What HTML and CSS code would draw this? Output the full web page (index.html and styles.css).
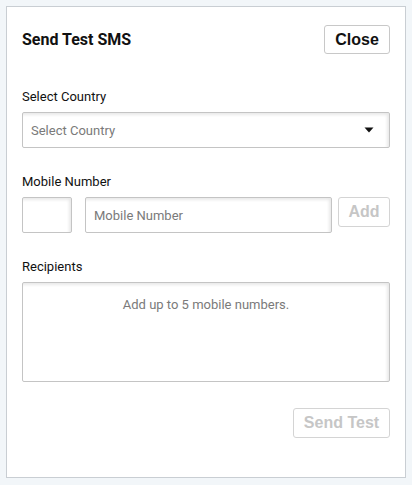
FILE: index.html
```html
<!DOCTYPE html>
<html lang="en">
<head>
<meta charset="utf-8">
<title>Send Test SMS</title>
<link rel="stylesheet" href="styles.css">
</head>
<body>
<div class="card">
  <div class="header">
    <h1 class="title">Send Test SMS</h1>
    <button class="btn btn-close" type="button">Close</button>
  </div>

  <div class="group">
    <label class="label">Select Country</label>
    <div class="field select">
      <span class="placeholder">Select Country</span>
      <svg class="caret" width="10" height="6" viewBox="0 0 10 6"><path d="M0.5 0.5 H9.5 L5 5.5 Z" fill="#111"/></svg>
    </div>
  </div>

  <div class="group">
    <label class="label">Mobile Number</label>
    <div class="mobile-row">
      <div class="field code"></div>
      <div class="field number"><span class="placeholder">Mobile Number</span></div>
      <button class="btn btn-disabled btn-add" type="button">Add</button>
    </div>
  </div>

  <div class="group">
    <label class="label">Recipients</label>
    <div class="field recipients"><span class="placeholder">Add up to 5 mobile numbers.</span></div>
  </div>

  <div class="footer">
    <button class="btn btn-disabled btn-send" type="button">Send Test</button>
  </div>
</div>
</body>
</html>
```

FILE: styles.css
```css
* { box-sizing: border-box; }

html, body {
  margin: 0;
  padding: 0;
  background: #f2f6f9;
}

body {
  padding: 6px 0 0 6px;
  font-family: Roboto, "Liberation Sans", Arial, sans-serif;
  color: #111;
}

.card {
  width: 400px;
  height: 472px;
  background: #fff;
  border: 1px solid #c9ced3;
  padding: 18px 15px 0 15px;
}

.header {
  display: flex;
  align-items: center;
  justify-content: space-between;
  height: 29px;
  margin-bottom: 35px;
}

.title {
  margin: 0;
  font-size: 16px;
  font-weight: 700;
  color: #111;
  line-height: 20px;
}

.btn {
  font-family: "Liberation Sans", Arial, Helvetica, sans-serif;
  font-weight: 700;
  font-size: 16px;
  background: #fff;
  border: 1px solid #c8c8c8;
  border-radius: 3px;
  padding: 0 9px;
  line-height: 18px;
  margin: 0;
  white-space: nowrap;
}

.btn-close {
  height: 29px;
  width: 66px;
  color: #111;
}

.btn-disabled {
  color: #c6c6c6;
  border-color: #d4d4d4;
  height: 30px;
}

.group {
  margin-bottom: 26px;
}

.label {
  display: block;
  font-size: 13px;
  line-height: 16px;
  margin-bottom: 7px;
  color: #111;
}

.field {
  border: 1px solid #c4c4c4;
  border-radius: 2px;
  background: #fff;
  box-shadow: inset -2px 2px 3px rgba(0, 0, 0, 0.09);
}

.placeholder {
  font-size: 13px;
  color: #7a7a7a;
}

.select {
  height: 36px;
  display: flex;
  align-items: center;
  justify-content: space-between;
  padding: 0 15px 0 8px;
}

.caret { display: block; }

.mobile-row {
  display: flex;
  align-items: flex-start;
}

.code {
  width: 50px;
  height: 36px;
  flex: none;
}

.number {
  margin-left: 13px;
  width: 247px;
  height: 36px;
  display: flex;
  align-items: center;
  padding-left: 8px;
  flex: none;
}

.btn-add {
  margin-left: 6px;
  width: 52px;
  flex: none;
}

.recipients {
  height: 100px;
  text-align: center;
  padding-top: 11px;
}

.footer {
  display: flex;
  justify-content: flex-end;
}

.btn-send {
  width: 97px;
}
```
